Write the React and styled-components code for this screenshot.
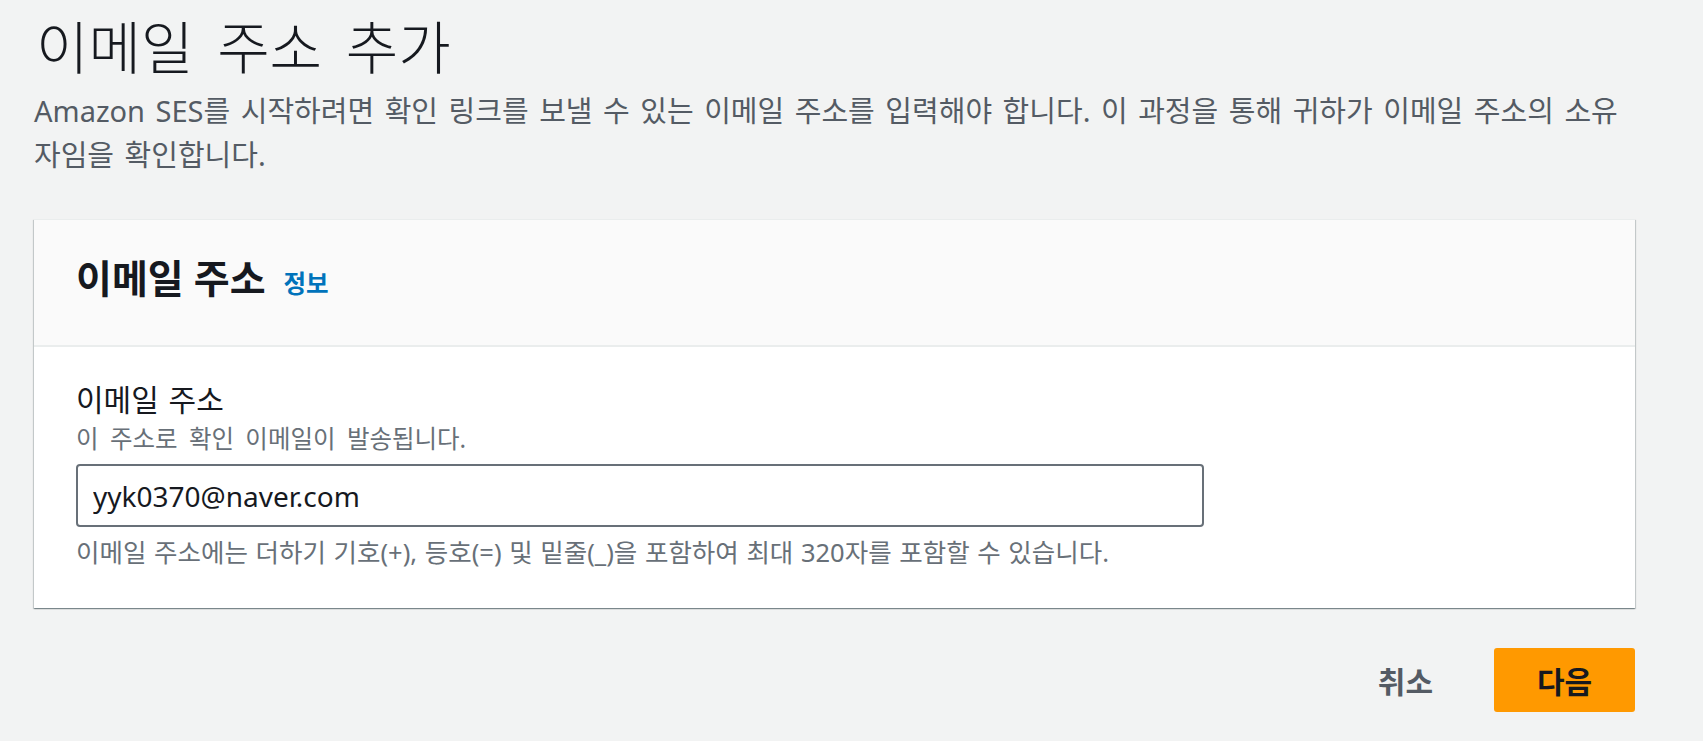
import React from "react";
import styled, { createGlobalStyle } from "styled-components";

const GlobalStyle = createGlobalStyle`
  body {
    margin: 0;
    background: #f2f3f3;
    font-family: "Noto Sans", "Noto Sans CJK KR", sans-serif;
    color: #16191f;
  }
`;

const Page = styled.div`
  width: 1601px;
  margin-left: 34px;
  padding-top: 18px;
  padding-bottom: 29px;
`;

const Title = styled.h1`
  margin: 0;
  font-size: 57px;
  line-height: 58px;
  font-weight: 300;
  word-spacing: 9px;
  color: #16191f;
  padding-left: 2px;
`;

const Intro = styled.p`
  margin: 13px 0 0;
  font-size: 29px;
  line-height: 44px;
  word-spacing: 3px;
  color: #545b64;
`;

const Card = styled.section`
  margin-top: 42px;
  background: #ffffff;
  border-top: 1px solid #eaeded;
  box-shadow: 0 1px 1px 0 rgba(0, 28, 36, 0.3),
    1px 1px 1px 0 rgba(0, 28, 36, 0.15), -1px 1px 1px 0 rgba(0, 28, 36, 0.15);
`;

const CardHeader = styled.header`
  display: flex;
  align-items: baseline;
  gap: 18px;
  padding: 36px 42px 45px;
  background: #fafafa;
  border-bottom: 2px solid #eaeded;
`;

const CardTitle = styled.h2`
  margin: 0;
  font-size: 39px;
  line-height: 44px;
  font-weight: 700;
  color: #16191f;
`;

const InfoLink = styled.a`
  font-size: 24.5px;
  font-weight: 700;
  color: #0073bb;
  text-decoration: none;
`;

const CardBody = styled.div`
  padding: 35px 42px 41px;
`;

const Label = styled.label`
  display: block;
  font-size: 30px;
  line-height: 36px;
  word-spacing: 2px;
  color: #16191f;
`;

const Hint = styled.div`
  margin-top: ${(props) => props.$top}px;
  font-size: ${(props) => props.$size}px;
  line-height: 30px;
  word-spacing: ${(props) => props.$spacing}px;
  color: #687078;
`;

const Input = styled.input`
  display: block;
  box-sizing: border-box;
  margin-top: 10px;
  width: 1128px;
  height: 63px;
  padding: 0 15px;
  border: 2px solid #687078;
  border-radius: 4px;
  background: #fff;
  font-family: "Noto Sans", "Noto Sans CJK KR", sans-serif;
  font-size: 28px;
  color: #16191f;
  outline: none;
`;

const Actions = styled.div`
  display: flex;
  justify-content: flex-end;
  align-items: center;
  gap: 31px;
  margin-top: 40px;
`;

const Button = styled.button`
  box-sizing: border-box;
  height: 64px;
  padding: 0 ${(props) => (props.$primary ? 40 : 30)}px;
  min-width: ${(props) => (props.$primary ? 141 : 0)}px;
  border: none;
  border-radius: 3px;
  background: ${(props) => (props.$primary ? "#ff9900" : "transparent")};
  color: ${(props) => (props.$primary ? "#16191f" : "#545b64")};
  font-family: "Noto Sans", "Noto Sans CJK KR", sans-serif;
  font-size: 30px;
  font-weight: 700;
  cursor: pointer;
`;

export default function App() {
  return (
    <>
      <GlobalStyle />
      <Page>
        <Title>이메일 주소 추가</Title>
        <Intro>
          Amazon SES를 시작하려면 확인 링크를 보낼 수 있는 이메일 주소를
          입력해야 합니다. 이 과정을 통해 귀하가 이메일 주소의 소유
          <br />
          자임을 확인합니다.
        </Intro>
        <Card>
          <CardHeader>
            <CardTitle>이메일 주소</CardTitle>
            <InfoLink href="#">정보</InfoLink>
          </CardHeader>
          <CardBody>
            <Label htmlFor="email">이메일 주소</Label>
            <Hint $top={6} $size={24.5} $spacing={5}>
              이 주소로 확인 이메일이 발송됩니다.
            </Hint>
            <Input id="email" type="text" defaultValue="yyk0370@naver.com" />
            <Hint $top={10} $size={25.5} $spacing={1}>
              이메일 주소에는 더하기 기호(+), 등호(=) 및 밑줄(_)을 포함하여
              최대 320자를 포함할 수 있습니다.
            </Hint>
          </CardBody>
        </Card>
        <Actions>
          <Button>취소</Button>
          <Button $primary>다음</Button>
        </Actions>
      </Page>
    </>
  );
}
